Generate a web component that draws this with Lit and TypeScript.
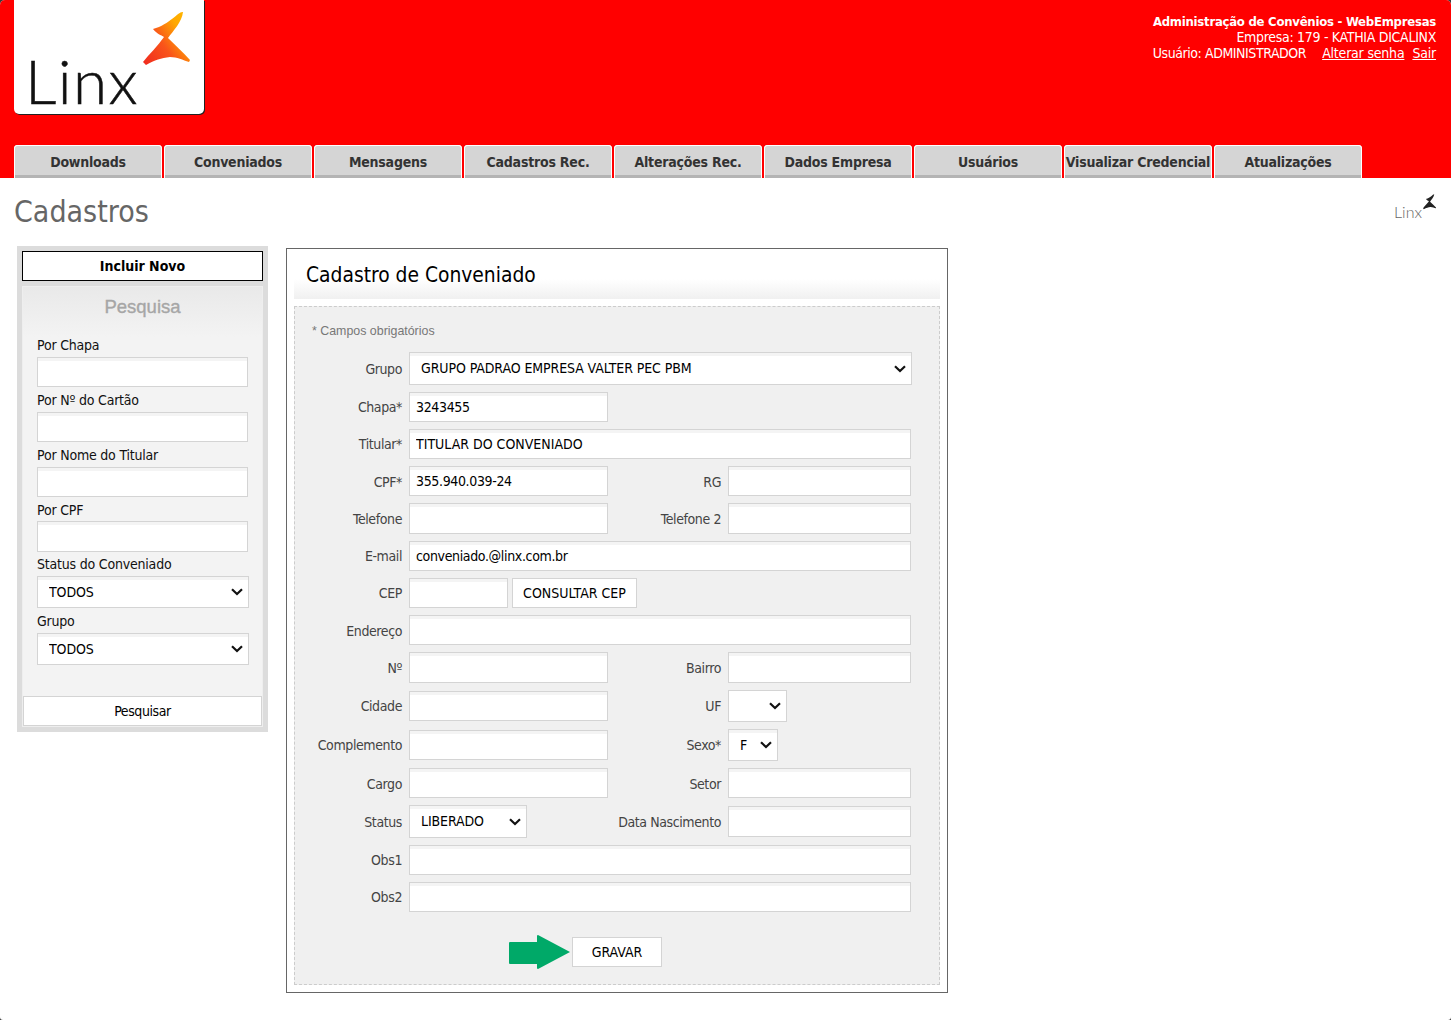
import { LitElement, html, css } from "lit";
import { customElement } from "lit/decorators.js";

const TABS = ["Downloads","Conveniados","Mensagens","Cadastros Rec.","Alterações Rec.","Dados Empresa","Usuários","Visualizar Credencial","Atualizações"];
const SWOOSH = "M183 12 C178 11 171 24 153 29 C157 34 161 35 164 37 C158 46 149 54 143 62 L146 65 C155 60 161 58 170 57 C177 57 183 60 189 62 L190 60 C183 52 175 45 168 38 C173 31 182 22 183 12 Z";

@customElement("app-root")
export class AppRoot extends LitElement {
  static styles = css`
    :host { display:block; height:1020px; background:#3a3a3a; overflow:hidden;
      font-family:"DejaVu Sans","Liberation Sans",sans-serif; font-stretch:condensed; font-size:14px; color:#000; }
    * { box-sizing:border-box; }
    .page { height:1020px; background:#fff; border-radius:5px 5px 3px 3px; overflow:hidden; }
    .top { height:178px; background:#f00; display:flex; flex-direction:column; padding:0 15px 0 14px; }
    .toprow { height:145px; flex:none; display:flex; justify-content:space-between; align-items:flex-start; }
    .logo { width:190px; height:114px; background:#fff; border-radius:0 0 5px 5px; box-shadow:1px 1px 0 #222; position:relative; }
    .logo svg { position:absolute; left:0; top:0; }
    .logo .word { position:absolute; left:11px; top:49px; font:300 62px/62px Lato,"Liberation Sans",sans-serif; font-stretch:normal; letter-spacing:1.4px; -webkit-text-stroke:.5px #111; color:#111; }
    .info { padding-top:13px; color:#fff; text-align:right; line-height:16px; letter-spacing:-.3px; }
    .info b { display:block; font-size:13px; line-height:17px; margin-bottom:-1px; letter-spacing:-.25px; }
    .info .who { letter-spacing:-.44px; }
    .info a { color:#fff; text-decoration:underline; margin-left:8px; letter-spacing:-.2px; }
    .info a:first-of-type { margin-left:16px; }
    .tabs { display:flex; gap:2px; height:33px; flex:none; }
    .tab { width:148px; background:#d5d5d5; border-radius:4px 4px 0 0; box-shadow:inset 0 1px 0 #fff, inset 1px 0 0 #fff, inset -1px 0 0 #fff, inset 0 -3px 0 #b4b4b4;
      text-align:center; font-weight:700; line-height:34px; color:#333; white-space:nowrap; letter-spacing:-.22px; }
    .title { height:68px; display:flex; justify-content:space-between; padding:0 15px 0 14px; }
    h1 { margin:0; font-size:30px; font-weight:400; line-height:67px; color:#666; }
    .mini { position:relative; width:42px; height:30px; margin-top:14px; }
    .mini span { position:absolute; left:0; bottom:2px; font:300 16px/17px Lato,"Liberation Sans",sans-serif; font-stretch:normal; color:#666; }
    .mini svg { position:absolute; left:0; top:0; }
    .body { display:flex; align-items:flex-start; padding-left:17px; }
    aside { width:251px; height:486px; background:#dcdcdc; padding:5px; display:flex; flex-direction:column; gap:5px; margin-right:18px; }
    .new { height:30px; flex:none; border:1px solid #000; background:#fff; text-align:center; font-weight:700; line-height:28px; }
    .panel { flex:1; border:1px solid #eee; background:linear-gradient(#e9e9e9,#f3f3f3 50px); padding:0 0 0 14px; display:flex; flex-direction:column; position:relative; }
    .panel h2 { margin:0; height:50px; text-align:center; font:400 18.5px/40px "Liberation Sans",sans-serif; font-stretch:normal; color:#a6a6a6; padding-right:14px; -webkit-text-stroke:.35px #a6a6a6; }
    .f { display:flex; flex-direction:column; }
    .f label { line-height:16px; height:16px; margin-bottom:4px; color:#111; letter-spacing:-.2px; }
    .f input { width:211px; margin-bottom:5px; }
    .f select { width:212px; height:32px; margin-bottom:5px; padding-bottom:0; }
    .f input.cpf { height:31px; margin-top:-1px; margin-bottom:4px; }
    input, select { height:30px; border:1px solid #d4d4d4; background-color:#fff; box-shadow:inset 0 3px 0 #f4f4f4; padding:0 6px; margin:0; outline:none; border-radius:0;
      font-family:inherit; font-stretch:condensed; font-size:14px; color:#000; }
    select { flex:none; appearance:none; -webkit-appearance:none; padding:0 0 2px 11px; height:33px; letter-spacing:-.1px;
      background-image:url("data:image/svg+xml,%3Csvg xmlns='http://www.w3.org/2000/svg' width='12' height='8'%3E%3Cpath d='M1 1.2 L6 6 L11 1.2' fill='none' stroke='%23111' stroke-width='2.2'/%3E%3C/svg%3E");
      background-repeat:no-repeat; background-position:right 5px center; }
    .search { position:absolute; left:0; right:0; bottom:0; height:30px; border:1px solid #d4d4d4; background:#fff; text-align:center; line-height:28px; letter-spacing:-.4px; }
    main { width:662px; height:745px; margin-top:2px; border:1px solid #666; background:#fff; padding:0 7px 7px; display:flex; flex-direction:column; }
    .chead { height:50px; flex:none; margin-bottom:7px; padding:12px 12px 0; font-size:20.8px; line-height:28px; background:linear-gradient(#fff 30px,#f0f0f0); }
    .form { flex:1; border:1px dashed #ccc; background:#f0f0f0; padding:0 14px; }
    .req { margin:16px 0 13px 3px; height:16px; font:12.4px/16px "Liberation Sans",sans-serif; font-stretch:normal; color:#777; }
    .grid { display:grid; grid-template-columns:100px 199px 120px 183px;
      grid-template-rows:40px 37px 37px 37px 38px 37px 37px 37px 39px 39px 38px 37px 40px 37px 55px 30px; align-items:start; }
    .l { padding-right:7px; line-height:30px; text-align:right; color:#444; white-space:nowrap; letter-spacing:-.4px; }
    .l.d1 { line-height:32px; }
    .l.d2 { line-height:34px; }
    .v { display:flex; gap:4px; }
    .v input { width:199px; flex:none; }
    .v input.tight { letter-spacing:-.35px; }
    .v input.h31 { height:31px; }
    .v input.data { height:31px; margin-top:1px; }
    .sp { grid-column:2 / 5; }
    .sp input { width:502px; }
    .sp input.chapa { width:199px; }
    .sp select { width:503px; }
    .c4 input { width:183px; }
    .v input.cep { width:99px; }
    .btn { height:30px; border:1px solid #d4d4d4; background:#fff; text-align:center; line-height:28px; }
    .btn.consult { width:125px; }
    .uf { width:59px; height:32px; margin-top:-1px; box-shadow:none; padding-bottom:0; }
    .sx { width:50px; height:32px; margin-top:-1px; padding-bottom:0; }
    .st { width:118px; }
    .gr { grid-column:1 / 5; grid-row:16; display:flex; padding-left:200px; height:34px; margin-top:-2px; align-items:center; }
    .gr svg { flex:none; }
    .gr .btn { width:90px; margin-left:2px; }
  `;

  private lab(t: string, c = "") { return html`<div class="l ${c}">${t}</div>`; }
  private inp(v = "", c = "") { return html`<div class="v"><input class=${c} .value=${v} /></div>`; }
  private inp2(v = "", c = "") { return html`<div class="v c4"><input class=${c} .value=${v} /></div>`; }
  private span(v = "", c = "") { return html`<div class="v sp"><input class=${c} .value=${v} /></div>`; }

  render() {
    return html`
      <div class="page">
      <div class="top">
        <div class="toprow">
          <div class="logo">
            <span class="word">Linx</span>
            <svg width="192" height="116" viewBox="14 0 192 116" aria-hidden="true">
              <defs><linearGradient id="sw" x1="0" y1="1" x2="1" y2="0.2">
                <stop offset="0" stop-color="#f0291f"/><stop offset=".45" stop-color="#f9541a"/><stop offset=".8" stop-color="#ffa800"/><stop offset="1" stop-color="#ffb400"/></linearGradient></defs>
              <path d=${SWOOSH} fill="url(#sw)"/>
            </svg>
          </div>
          <div class="info">
            <b>Administração de Convênios - WebEmpresas</b>
            <div>Empresa: 179 - KATHIA DICALINX</div>
            <div><span class="who">Usuário: ADMINISTRADOR</span><a>Alterar senha</a><a>Sair</a></div>
          </div>
        </div>
        <div class="tabs">${TABS.map(t => html`<div class="tab">${t}</div>`)}</div>
      </div>
      <div class="title">
        <h1>Cadastros</h1>
        <div class="mini">
          <span>Linx</span>
          <svg width="42" height="30" viewBox="0 0 42 30" aria-hidden="true">
            <path d=${SWOOSH} transform="translate(-11 -1) scale(.28)" fill="#222"/>
          </svg>
        </div>
      </div>
      <div class="body">
        <aside>
          <div class="new">Incluir Novo</div>
          <div class="panel">
            <h2>Pesquisa</h2>
            <div class="f"><label>Por Chapa</label><input /></div>
            <div class="f"><label>Por Nº do Cartão</label><input /></div>
            <div class="f"><label>Por Nome do Titular</label><input /></div>
            <div class="f"><label>Por CPF</label><input class="cpf" /></div>
            <div class="f"><label>Status do Conveniado</label><select><option>TODOS</option></select></div>
            <div class="f"><label>Grupo</label><select><option>TODOS</option></select></div>
            <div class="search">Pesquisar</div>
          </div>
        </aside>
        <main>
          <div class="chead">Cadastro de Conveniado</div>
          <div class="form">
            <div class="req">* Campos obrigatórios</div>
            <div class="grid">
              ${this.lab("Grupo","d2")}<div class="v sp"><select><option>GRUPO PADRAO EMPRESA VALTER PEC PBM</option></select></div>
              ${this.lab("Chapa*")}${this.span("3243455","tight chapa")}
              ${this.lab("Titular*")}${this.span("TITULAR DO CONVENIADO")}
              ${this.lab("CPF*","d1")}${this.inp("355.940.039-24","tight")}${this.lab("RG","d1")}${this.inp2()}
              ${this.lab("Telefone","d1")}${this.inp("","h31")}${this.lab("Telefone 2","d1")}${this.inp2("","h31")}
              ${this.lab("E-mail")}${this.span("conveniado.@linx.com.br","tight")}
              ${this.lab("CEP")}<div class="v sp"><input class="cep" /><div class="btn consult">CONSULTAR CEP</div></div>
              ${this.lab("Endereço","d1")}${this.span()}
              ${this.lab("Nº","d1")}${this.inp("","h31")}${this.lab("Bairro","d1")}${this.inp2("","h31")}
              ${this.lab("Cidade")}${this.inp()}${this.lab("UF")}<div class="v c4"><select class="uf"><option></option></select></div>
              ${this.lab("Complemento")}${this.inp()}${this.lab("Sexo*")}<div class="v c4"><select class="sx"><option>F</option></select></div>
              ${this.lab("Cargo","d1")}${this.inp()}${this.lab("Setor","d1")}${this.inp2()}
              ${this.lab("Status","d2")}<div class="v"><select class="st"><option>LIBERADO</option></select></div>${this.lab("Data Nascimento","d2")}${this.inp2("","data")}
              ${this.lab("Obs1")}${this.span()}
              ${this.lab("Obs2")}${this.span()}
              <div class="gr">
                <svg width="61" height="34" viewBox="509 936 61 34" aria-hidden="true"><path d="M510 943 H537 V937 Q537 936 538 936 L570 953 L538 970 Q537 970 537 969 V965 H510 Q509 965 509 964 V944 Q509 943 510 943 Z" fill="#00a968"/></svg>
                <div class="btn">GRAVAR</div>
              </div>
            </div>
          </div>
        </main>
      </div>
      </div>
    `;
  }
}
